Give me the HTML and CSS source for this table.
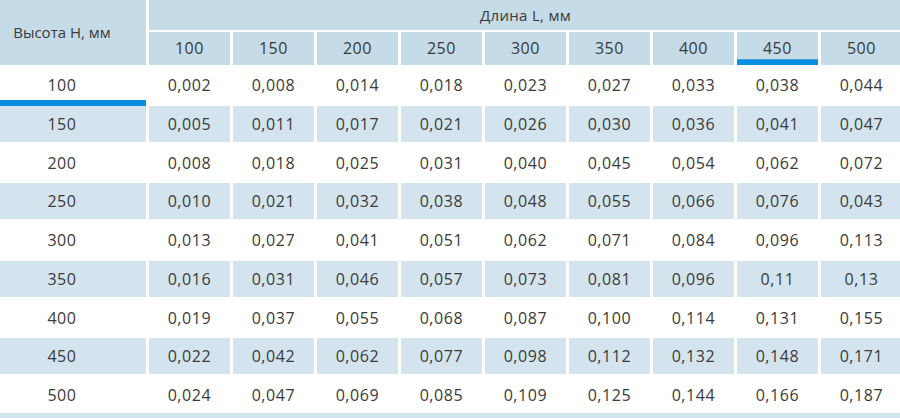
FILE: index.html
```html
<!DOCTYPE html>
<html lang="ru">
<head>
<meta charset="utf-8">
<title>Таблица</title>
<link rel="stylesheet" href="styles.css">
</head>
<body>
<div class="table">
  <div class="cell head first">Высота H, мм</div>
  <div class="cell head span">Длина L, мм</div>
  <div class="cell head">100</div>
  <div class="cell head">150</div>
  <div class="cell head">200</div>
  <div class="cell head">250</div>
  <div class="cell head">300</div>
  <div class="cell head">350</div>
  <div class="cell head">400</div>
  <div class="cell head active">450</div>
  <div class="cell head">500</div>

  <div class="cell rh marked">100</div>
  <div class="cell">0,002</div><div class="cell">0,008</div><div class="cell">0,014</div><div class="cell">0,018</div><div class="cell">0,023</div><div class="cell">0,027</div><div class="cell">0,033</div><div class="cell">0,038</div><div class="cell">0,044</div>

  <div class="cell rh tint">150</div>
  <div class="cell tint">0,005</div><div class="cell tint">0,011</div><div class="cell tint">0,017</div><div class="cell tint">0,021</div><div class="cell tint">0,026</div><div class="cell tint">0,030</div><div class="cell tint">0,036</div><div class="cell tint">0,041</div><div class="cell tint">0,047</div>

  <div class="cell rh">200</div>
  <div class="cell">0,008</div><div class="cell">0,018</div><div class="cell">0,025</div><div class="cell">0,031</div><div class="cell">0,040</div><div class="cell">0,045</div><div class="cell">0,054</div><div class="cell">0,062</div><div class="cell">0,072</div>

  <div class="cell rh tint">250</div>
  <div class="cell tint">0,010</div><div class="cell tint">0,021</div><div class="cell tint">0,032</div><div class="cell tint">0,038</div><div class="cell tint">0,048</div><div class="cell tint">0,055</div><div class="cell tint">0,066</div><div class="cell tint">0,076</div><div class="cell tint">0,043</div>

  <div class="cell rh">300</div>
  <div class="cell">0,013</div><div class="cell">0,027</div><div class="cell">0,041</div><div class="cell">0,051</div><div class="cell">0,062</div><div class="cell">0,071</div><div class="cell">0,084</div><div class="cell">0,096</div><div class="cell">0,113</div>

  <div class="cell rh tint">350</div>
  <div class="cell tint">0,016</div><div class="cell tint">0,031</div><div class="cell tint">0,046</div><div class="cell tint">0,057</div><div class="cell tint">0,073</div><div class="cell tint">0,081</div><div class="cell tint">0,096</div><div class="cell tint">0,11</div><div class="cell tint">0,13</div>

  <div class="cell rh">400</div>
  <div class="cell">0,019</div><div class="cell">0,037</div><div class="cell">0,055</div><div class="cell">0,068</div><div class="cell">0,087</div><div class="cell">0,100</div><div class="cell">0,114</div><div class="cell">0,131</div><div class="cell">0,155</div>

  <div class="cell rh tint">450</div>
  <div class="cell tint">0,022</div><div class="cell tint">0,042</div><div class="cell tint">0,062</div><div class="cell tint">0,077</div><div class="cell tint">0,098</div><div class="cell tint">0,112</div><div class="cell tint">0,132</div><div class="cell tint">0,148</div><div class="cell tint">0,171</div>

  <div class="cell rh">500</div>
  <div class="cell">0,024</div><div class="cell">0,047</div><div class="cell">0,069</div><div class="cell">0,085</div><div class="cell">0,109</div><div class="cell">0,125</div><div class="cell">0,144</div><div class="cell">0,166</div><div class="cell">0,187</div>
</div>
</body>
</html>
```
FILE: styles.css
```css
html, body {
  margin: 0;
  padding: 0;
  background: #ffffff;
  overflow: hidden;
}

.table {
  display: grid;
  width: 902px;
  grid-template-columns: 146px repeat(9, 81px);
  grid-template-rows: 29.5px 32.5px repeat(9, 36px);
  column-gap: 3px;
  row-gap: 2.7px;
  border-bottom: 5px solid #d3e4ef;
  font-family: "Open Sans", "DejaVu Sans", sans-serif;
  font-size: 16px;
  letter-spacing: 0.6px;
  color: #3a3a3a;
}

.cell {
  display: flex;
  align-items: center;
  justify-content: center;
  white-space: nowrap;
}

.head {
  background: #c5dbe8;
}

.first {
  grid-row: 1 / span 2;
  padding-right: 22px;
  font-size: 15px;
  letter-spacing: 0;
}

.span {
  grid-column: 2 / span 9;
  font-size: 15px;
  letter-spacing: 0.3px;
}

.active {
  box-shadow: inset 0 -5.7px 0 #0a8fe0;
}

.rh {
  padding-right: 22px;
}

.tint {
  background: #d3e4ef;
}

.marked {
  position: relative;
}

.marked::after {
  content: "";
  position: absolute;
  left: 0;
  right: 0;
  bottom: -2.4px;
  height: 5.7px;
  background: #0a8fe0;
}
```
